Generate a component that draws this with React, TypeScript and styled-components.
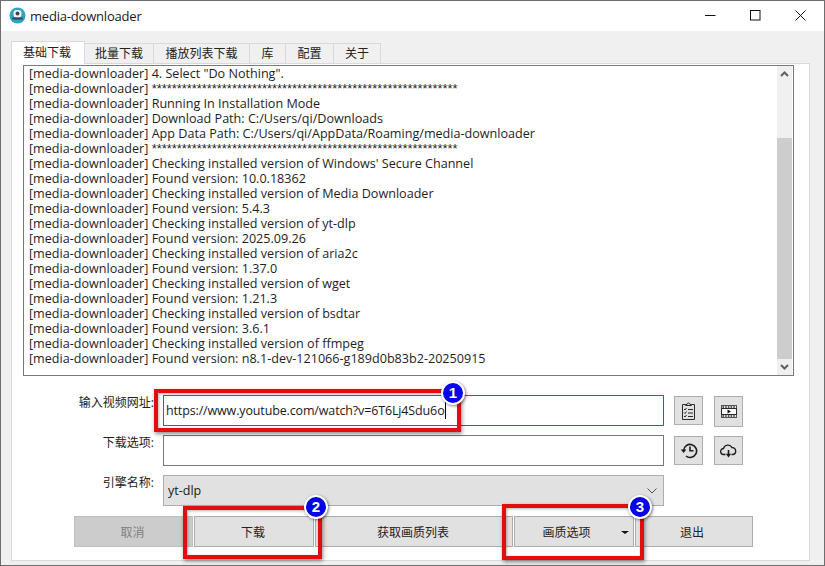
import styled, { createGlobalStyle } from "styled-components";

const GlobalStyle = createGlobalStyle`
    html, body {
        margin: 0;
        padding: 0;
        background: #ffffff;
    }
    body {
        font-family: "Open Sans", "Noto Sans CJK SC", sans-serif;
        font-size: 13px;
        color: #1a1a1a;
    }
`;

const Frame = styled.div`
    position: relative;
    width: 825px;
    height: 566px;
    box-sizing: border-box;
    border: 1px solid #6e6e6e;
    display: flex;
    flex-direction: column;
    overflow: hidden;
`;

const TitleBar = styled.div`
    height: 30px;
    box-sizing: border-box;
    background: #ffffff;
    display: flex;
    align-items: center;
    padding: 0 0 1px 8px;
    flex: none;
`;

const TitleText = styled.span`
    margin-left: 4px;
    font-size: 13px;
    letter-spacing: -0.2px;
    flex: 1;
`;

const WinButton = styled.div`
    width: 50px;
    height: 29px;
    display: flex;
    align-items: center;
    justify-content: center;
    margin-right: -5px;
    &:last-child {
        margin-right: -1px;
    }
`;

const Client = styled.div`
    flex: 1;
    background: #f0f0f0;
    padding: 10px 14px 4px 10px;
    display: flex;
    flex-direction: column;
`;

const TabRow = styled.div`
    display: flex;
    align-items: flex-end;
    height: 23px;
    position: relative;
    z-index: 1;
    margin-bottom: -1px;
`;

const Tab = styled.div<{ $w: number; $active?: boolean }>`
    width: ${(p) => p.$w}px;
    height: ${(p) => (p.$active ? 23 : 21)}px;
    box-sizing: border-box;
    border: 1px solid #d9d9d9;
    border-left-width: ${(p) => (p.$active ? 1 : 0)}px;
    border-bottom: ${(p) => (p.$active ? "none" : "1px solid #d9d9d9")};
    background: ${(p) => (p.$active ? "#ffffff" : "#f0f0f0")};
    padding-right: ${(p) => (p.$active ? 2 : 0)}px;
    font-size: 12px;
    text-align: center;
    line-height: ${(p) => (p.$active ? 21 : 19)}px;
    color: #222;
`;

const Pane = styled.div`
    flex: 1;
    background: #ffffff;
    border: 1px solid #d9d9d9;
    padding: 1px 15px 0 11px;
    display: flex;
    flex-direction: column;
`;

const LogBox = styled.div`
    height: 311px;
    box-sizing: border-box;
    border: 1px solid #7a7a7a;
    display: flex;
    flex: none;
`;

const LogText = styled.div`
    flex: 1;
    overflow: hidden;
    padding: 0 0 0 5px;
    font-size: 12.6px;
    line-height: 15px;
    white-space: pre;
    color: #1e1e1e;
`;

const Stars = styled.span`
    font-family: "Liberation Sans", sans-serif;
    font-size: 12.9px;
`;

const ScrollBar = styled.div`
    width: 15px;
    margin-right: 1px;
    background: #f0f0f0;
    display: flex;
    flex-direction: column;
    align-items: center;
`;

const ScrollArrow = styled.div`
    height: 16px;
    display: flex;
    align-items: center;
    justify-content: center;
    flex: none;
`;

const ScrollTrack = styled.div`
    flex: 1;
    width: 100%;
    padding-top: 56px;
    box-sizing: border-box;
    display: flex;
`;

const ScrollThumb = styled.div`
    flex: 1;
    background: #cdcdcd;
`;

const FormGrid = styled.div`
    display: grid;
    grid-template-columns: 131px 501px 1fr;
    column-gap: 9px;
    row-gap: 9px;
    margin-top: 19px;
    grid-auto-rows: 31px;
`;

const FieldLabel = styled.label`
    font-size: 12px;
    text-align: right;
    line-height: 16px;
    color: #222;
`;

const TextInput = styled.div<{ $focus?: boolean }>`
    box-sizing: border-box;
    height: 31px;
    background: #ffffff;
    border: 1px solid ${(p) => (p.$focus ? "#0078a8" : "#7a7a7a")};
    display: flex;
    align-items: center;
    padding-left: 2px;
    font-size: 12.5px;
    letter-spacing: -0.14px;
    white-space: pre;
`;

const Caret = styled.span`
    display: inline-block;
    width: 1px;
    height: 17px;
    background: #000;
`;

const ToolGroup = styled.div`
    display: flex;
    gap: 11px;
    padding: 1px 0 0 1px;
`;

const IconButton = styled.div<{ $tall?: boolean }>`
    width: 29px;
    height: ${(p) => (p.$tall ? 31 : 29)}px;
    box-sizing: border-box;
    background: #e1e1e1;
    border: 1px solid #adadad;
    display: flex;
    align-items: center;
    justify-content: center;
    color: #222;
`;

const Combo = styled.div`
    box-sizing: border-box;
    height: 31px;
    background: #e1e1e1;
    border: 1px solid #adadad;
    display: flex;
    align-items: center;
    justify-content: space-between;
    padding: 0 6px 0 4px;
    font-size: 12.5px;
`;

const ButtonRow = styled.div`
    display: flex;
    margin-top: 10px;
    margin-left: 51px;
    height: 31px;
`;

const ActionButton = styled.div<{ $w: number; $pad?: number; $disabled?: boolean }>`
    width: ${(p) => p.$w}px;
    margin-right: 1px;
    padding-right: ${(p) => p.$pad ?? 2}px;
    box-sizing: border-box;
    position: relative;
    background: ${(p) => (p.$disabled ? "#cccccc" : "#e1e1e1")};
    border: 1px solid ${(p) => (p.$disabled ? "#bfbfbf" : "#adadad")};
    color: ${(p) => (p.$disabled ? "#808080" : "#222")};
    font-size: 12px;
    display: flex;
    align-items: center;
    justify-content: center;
`;

const MenuCaret = styled.span`
    position: absolute;
    right: 4px;
    top: 14px;
    width: 0;
    height: 0;
    border-left: 4px solid transparent;
    border-right: 4px solid transparent;
    border-top: 3px solid #111;
`;

const Highlight = styled.div<{ $x: number; $y: number; $w: number; $h: number }>`
    position: absolute;
    left: ${(p) => p.$x}px;
    top: ${(p) => p.$y}px;
    width: ${(p) => p.$w}px;
    height: ${(p) => p.$h}px;
    box-sizing: border-box;
    border: 4px solid #e30d0d;
    box-shadow: 1px 2px 4px rgba(0, 0, 0, 0.45), inset 1px 1px 3px rgba(0, 0, 0, 0.3);
`;

const Badge = styled.div<{ $x: number; $y: number }>`
    position: absolute;
    left: ${(p) => p.$x - 12}px;
    top: ${(p) => p.$y - 12}px;
    width: 24px;
    height: 24px;
    box-sizing: border-box;
    border-radius: 50%;
    background: #0505e6;
    border: 2px solid #ffffff;
    box-shadow: 1px 1px 3px rgba(0, 0, 0, 0.5);
    color: #fff;
    font-family: "Liberation Sans", sans-serif;
    font-weight: bold;
    font-size: 15px;
    line-height: 20px;
    text-align: center;
`;

const STARS = "*".repeat(61);

const logLines = [
    '4. Select "Do Nothing".',
    STARS,
    "Running In Installation Mode",
    "Download Path: C:/Users/qi/Downloads",
    "App Data Path: C:/Users/qi/AppData/Roaming/media-downloader",
    STARS,
    "Checking installed version of Windows' Secure Channel",
    "Found version: 10.0.18362",
    "Checking installed version of Media Downloader",
    "Found version: 5.4.3",
    "Checking installed version of yt-dlp",
    "Found version: 2025.09.26",
    "Checking installed version of aria2c",
    "Found version: 1.37.0",
    "Checking installed version of wget",
    "Found version: 1.21.3",
    "Checking installed version of bsdtar",
    "Found version: 3.6.1",
    "Checking installed version of ffmpeg",
    "Found version: n8.1-dev-121066-g189d0b83b2-20250915",
];

const tabs = [
    { label: "基础下载", w: 74, active: true },
    { label: "批量下载", w: 69 },
    { label: "播放列表下载", w: 96 },
    { label: "库", w: 36 },
    { label: "配置", w: 48 },
    { label: "关于", w: 47 },
];

function AppLogo() {
    return (
        <svg width="17" height="17" viewBox="0 0 17 17">
            <circle cx="8.5" cy="8.5" r="8" fill="#2aa3c4" />
            <rect x="4.5" y="3" width="8" height="7.5" rx="3" fill="#f4f4f4" />
            <circle cx="8.5" cy="6.5" r="2" fill="#37474f" />
            <rect x="3" y="10.5" width="11" height="2" rx="1" fill="#37474f" />
        </svg>
    );
}

function ClipboardIcon() {
    return (
        <svg width="15" height="18" viewBox="0 0 15 18" fill="none" stroke="#2a2a2a" strokeWidth="1">
            <path d="M4.5 2.5H1.5v15h12v-15h-3" />
            <path d="M4.5 3.5v-1h1.5a1.5 1.5 0 0 1 3 0h1.5v1z" fill="#e1e1e1" />
            <path d="M3 7l1 1 1.5-2M3 10.5l1 1 1.5-2M3 14l1 1 1.5-2" />
            <path d="M7 7.5h5M7 11h5M7 14.5h5" strokeWidth="1.2" />
        </svg>
    );
}

function FilmIcon() {
    return (
        <svg width="16" height="13" viewBox="0 0 16 13" fill="none">
            <rect x="0.5" y="0.5" width="15" height="12" fill="#ececec" stroke="#555" />
            <rect x="0.5" y="3.5" width="15" height="6" fill="#fafafa" stroke="#2a2a2a" />
            <path d="M1.5 2h13M1.5 11h13" stroke="#2a2a2a" strokeDasharray="1.5 1.2" strokeWidth="1.4" />
            <path d="M6.5 4.5v4l3.5-2z" fill="#111" />
        </svg>
    );
}

function HistoryIcon() {
    return (
        <svg width="18" height="17" viewBox="0 0 18 17" fill="none" stroke="#1c1c1c" strokeWidth="1.6">
            <path d="M3.6 8.5A6.5 6.5 0 1 1 6 14" />
            <path d="M0.8 7.5h5.6l-2.8 3.4z" fill="#1c1c1c" stroke="none" />
            <path d="M10 4.5v4.3h3.5" />
        </svg>
    );
}

function CloudIcon() {
    return (
        <svg width="17" height="14" viewBox="0 0 17 14" fill="none" stroke="#1c1c1c" strokeWidth="1.3">
            <path d="M5.5 10.5H3.8a3 3 0 0 1-.3-6A4.6 4.6 0 0 1 12 3.6a3.5 3.5 0 0 1 1 6.9h-1.5" />
            <path d="M8.5 6v5" strokeWidth="1.6" />
            <path d="M5.8 9.8h5.4l-2.7 3.6z" fill="#1c1c1c" stroke="none" />
        </svg>
    );
}

export default function App() {
    return (
        <>
            <GlobalStyle />
            <Frame>
                <TitleBar>
                    <AppLogo />
                    <TitleText>media-downloader</TitleText>
                    <WinButton>
                        <svg width="11" height="11" viewBox="0 0 11 11"><path d="M0 5.5h10.5" stroke="#111" /></svg>
                    </WinButton>
                    <WinButton>
                        <svg width="11" height="11" viewBox="0 0 11 11"><rect x="0.5" y="0.5" width="9.5" height="9.5" fill="none" stroke="#111" /></svg>
                    </WinButton>
                    <WinButton>
                        <svg width="11" height="11" viewBox="0 0 11 11"><path d="M0.5 0.5l10 10M10.5 0.5l-10 10" stroke="#111" /></svg>
                    </WinButton>
                </TitleBar>
                <Client>
                    <TabRow>
                        {tabs.map((t) => (
                            <Tab key={t.label} $w={t.w} $active={t.active}>{t.label}</Tab>
                        ))}
                    </TabRow>
                    <Pane>
                        <LogBox>
                            <LogText>
                                {logLines.map((l, i) => (
                                    <div key={i}>[media-downloader] {l === STARS ? <Stars>{l}</Stars> : l}</div>
                                ))}
                            </LogText>
                            <ScrollBar>
                                <ScrollArrow>
                                    <svg width="9" height="6" viewBox="0 0 9 6"><path d="M1 5l3.5-3.5L8 5" fill="none" stroke="#606060" strokeWidth="2" /></svg>
                                </ScrollArrow>
                                <ScrollTrack><ScrollThumb /></ScrollTrack>
                                <ScrollArrow>
                                    <svg width="9" height="6" viewBox="0 0 9 6"><path d="M1 1l3.5 3.5L8 1" fill="none" stroke="#606060" strokeWidth="2" /></svg>
                                </ScrollArrow>
                            </ScrollBar>
                        </LogBox>
                        <FormGrid>
                            <FieldLabel>输入视频网址:</FieldLabel>
                            <TextInput $focus>https://www.youtube.com/watch?v=6T6Lj4Sdu6o<Caret /></TextInput>
                            <ToolGroup>
                                <IconButton><ClipboardIcon /></IconButton>
                                <IconButton $tall><FilmIcon /></IconButton>
                            </ToolGroup>
                            <FieldLabel>下载选项:</FieldLabel>
                            <TextInput />
                            <ToolGroup>
                                <IconButton><HistoryIcon /></IconButton>
                                <IconButton><CloudIcon /></IconButton>
                            </ToolGroup>
                            <FieldLabel>引擎名称:</FieldLabel>
                            <Combo>
                                yt-dlp
                                <svg width="10" height="6" viewBox="0 0 10 6"><path d="M0.5 0.5L5 5l4.5-4.5" fill="none" stroke="#555" /></svg>
                            </Combo>
                        </FormGrid>
                        <ButtonRow>
                            <ActionButton $w={119} $disabled>取消</ActionButton>
                            <ActionButton $w={120}>下载</ActionButton>
                            <ActionButton $w={198}>获取画质列表</ActionButton>
                            <ActionButton $w={120} $pad={15}>画质选项<MenuCaret /></ActionButton>
                            <ActionButton $w={118} $pad={4}>退出</ActionButton>
                        </ButtonRow>
                    </Pane>
                </Client>
                <Highlight $x={153} $y={388} $w={307} $h={43} />
                <Highlight $x={182} $y={505} $w={139} $h={53} />
                <Highlight $x={501} $y={503} $w={142} $h={56} />
                <Badge $x={452} $y={392}>1</Badge>
                <Badge $x={315} $y={506}>2</Badge>
                <Badge $x={639} $y={506}>3</Badge>
            </Frame>
        </>
    );
}
